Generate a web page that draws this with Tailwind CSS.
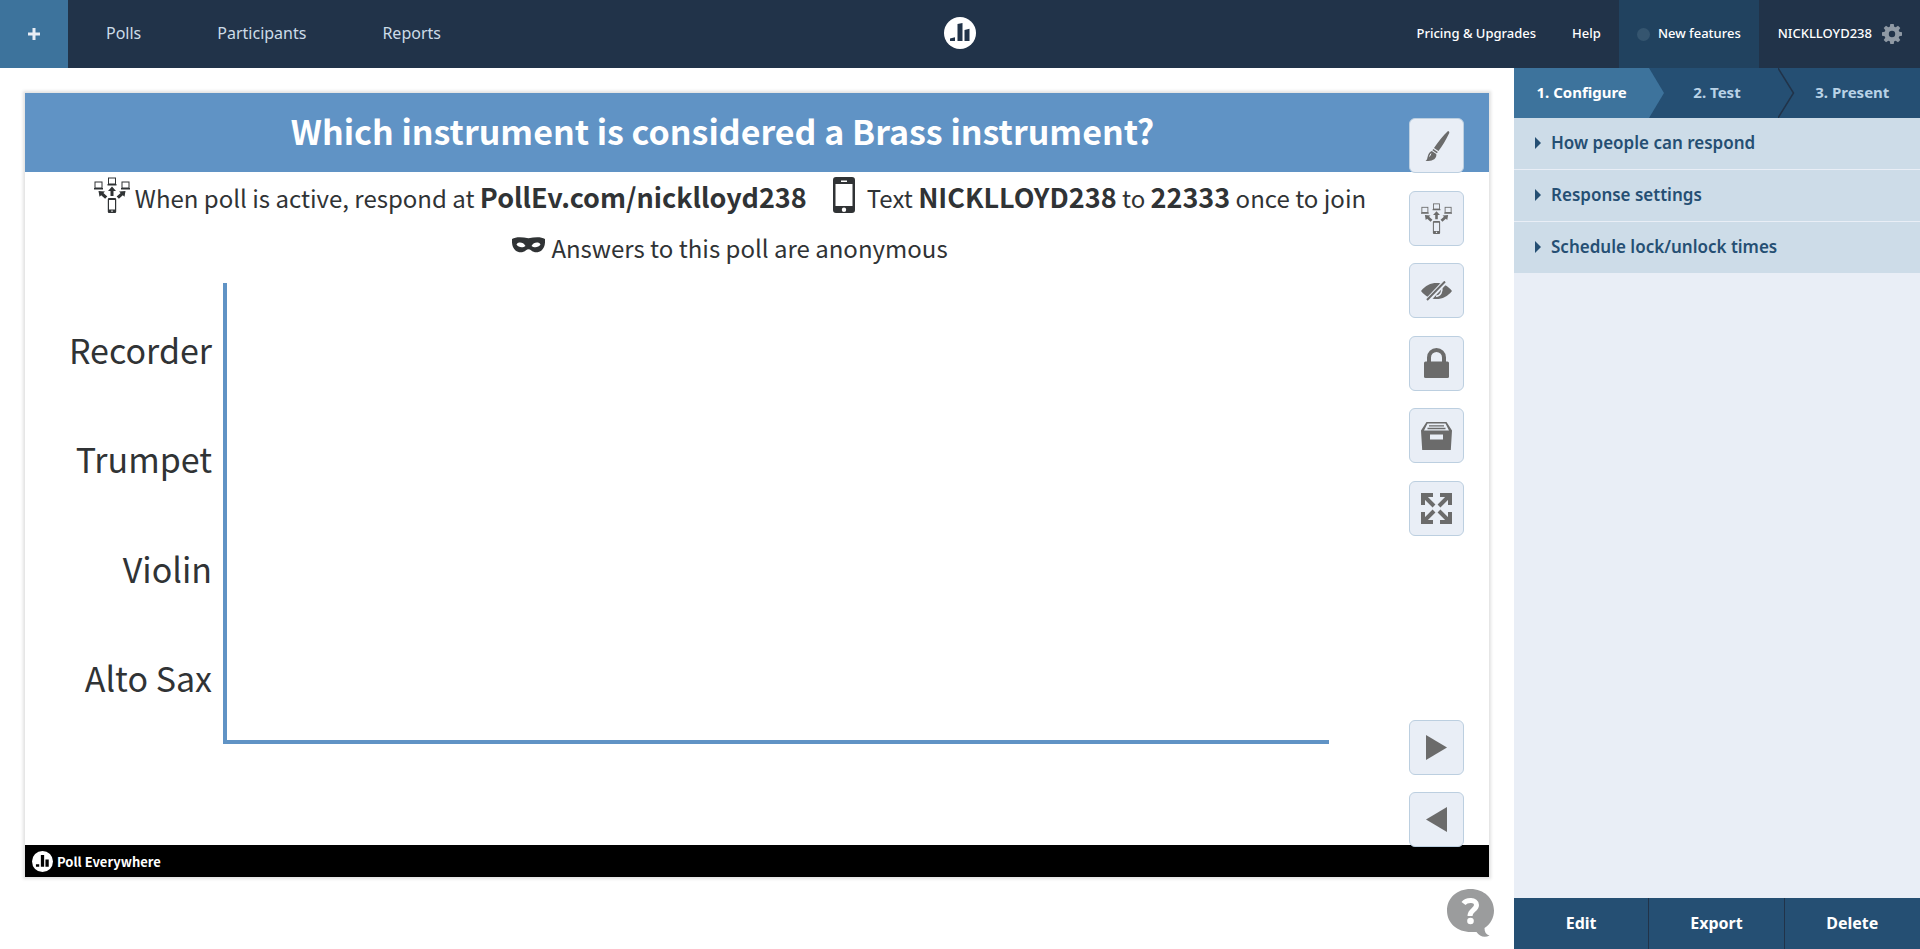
<!DOCTYPE html>
<html lang="en">
<head>
    <meta charset="UTF-8">
    <meta name="viewport" content="width=device-width, initial-scale=1.0">
    <title>Which instrument is considered a Brass instrument? - Poll Everywhere</title>
    <script src="https://cdn.jsdelivr.net/npm/@tailwindcss/browser@4"></script>
</head>
<body class="bg-white h-screen flex flex-col font-['Noto_Sans',sans-serif]">
    <!-- shared icons -->
    <svg class="hidden">
        <symbol id="icon-devices" viewBox="0 0 36 36">
            <g fill="none" stroke="currentColor">
                <rect x="1" y="5" width="7" height="6" />
                <rect x="14.500" y="1" width="7" height="6" />
                <rect x="28" y="5" width="7" height="6" />
            </g>
            <path fill="currentColor" d="M0 11h9v1.500H0zM13.500 7h9v1.500h-9zM27 11h9v1.500h-9zM18 9.500l4 4.500h-2.500v5h-3v-5H14zM4.500 14l6.500.500-1.600 1.500 3.900 3.500-2.200 2.200-3.900-3.500L5.500 19.800zM31.500 14l-6.500.500 1.600 1.500-3.900 3.500 2.200 2.200 3.900-3.500 1.700 1.600z" />
            <path fill="currentColor" fill-rule="evenodd" d="M15 21h6a1.200 1.200 0 0 1 1.200 1.200v12.600A1.200 1.200 0 0 1 21 36h-6a1.200 1.200 0 0 1-1.200-1.200V22.200A1.200 1.200 0 0 1 15 21zm0 2v9.500h6V23zm2.300 10.400v1.400h1.400v-1.400z" />
        </symbol>
    </svg>

    <header class="h-[68px] shrink-0 flex items-center bg-[#213349] text-white relative">
        <button type="button" aria-label="New poll" class="w-[68px] h-full bg-[#3d739c] flex items-center justify-center">
            <svg class="w-3 h-3 text-[#e9eef5]" viewBox="0 0 12 12"><path fill="currentColor" d="M4.500 0h3v4.500H12v3H7.500V12h-3V7.500H0v-3h4.500z" /></svg>
        </button>
        <nav class="flex pb-[2px] text-base text-[#cddce8]">
            <a href="#" class="px-[38px]">Polls</a>
            <a href="#" class="px-[38px]">Participants</a>
            <a href="#" class="px-[38px]">Reports</a>
        </nav>
        <a href="#" aria-label="Poll Everywhere" class="absolute left-1/2 top-[17px] -translate-x-1/2">
            <svg class="w-8 h-8" viewBox="0 0 32 32">
                <circle cx="16" cy="16" r="16" fill="#fff" />
                <path fill="#213349" d="M6 21.500l5-1.300V24H6zM13.500 7l5-1v18h-5zM20.500 13l5-1.300V24h-5z" />
            </svg>
        </a>
        <nav class="ml-auto h-full flex items-center text-[13px] font-medium">
            <a href="#" class="px-[18px]">Pricing &amp; Upgrades</a>
            <a href="#" class="px-[18px]">Help</a>
            <a href="#" class="h-full px-[18px] bg-[#21425f] flex items-center gap-2">
                <span class="w-[13px] h-[13px] rounded-full bg-[#35556f]"></span>
                New features
            </a>
            <a href="#" class="pl-[19px] pr-[18px] flex items-center gap-[10px]">
                NICKLLOYD238
                <svg class="w-5 h-5 text-[#8f99a4]" viewBox="0 0 20 20">
                    <path fill="currentColor" fill-rule="evenodd" d="M8.300 0h3.400l.5 2.700 1.500.6L16 1.700 18.300 4l-1.600 2.300.6 1.500 2.700.5v3.400l-2.700.5-.6 1.500 1.600 2.300-2.300 2.300-2.300-1.600-1.500.6-.5 2.700H8.300l-.5-2.700-1.500-.6L4 18.300 1.700 16l1.600-2.300-.6-1.500L0 11.700V8.300l2.700-.5.6-1.500L1.700 4 4 1.700l2.300 1.600 1.500-.6zM10 6.800a3.200 3.200 0 1 0 0 6.400 3.200 3.200 0 0 0 0-6.400z" />
                </svg>
            </a>
        </nav>
    </header>

    <div class="flex-1 min-h-0 flex">
        <main class="flex-1 relative flex flex-col pt-[25px] pb-[72px] px-[25px]">
            <!-- slide -->
            <section class="flex-1 relative flex flex-col shadow-[0_0_3px_2px_rgba(0,0,0,0.12)] font-['Noto_Sans_CJK_SC',sans-serif] text-[#303335]">
                <h1 class="h-[79px] pr-[69px] pb-1 bg-[#6093c5] flex items-center justify-center text-white text-[34px] font-bold leading-none">Which instrument is considered a Brass instrument?</h1>
                <div class="pr-[54px] text-2xl">
                    <p class="h-[51px] pb-[2px] flex items-center justify-center whitespace-pre leading-none">
                        <svg class="w-9 h-9 mr-[5px] mb-1 shrink-0"><use href="#icon-devices" /></svg>
                        <span>When poll is active, respond at <strong class="text-[27px]">PollEv.com/nicklloyd238</strong></span>
                        <svg class="w-[22px] h-9 ml-[26px] mr-3 mb-1 shrink-0" viewBox="0 0 22 36">
                            <path fill="currentColor" fill-rule="evenodd" d="M3 0h16a3 3 0 0 1 3 3v30a3 3 0 0 1-3 3H3a3 3 0 0 1-3-3V3a3 3 0 0 1 3-3zM2.500 7v22h17V7zM8 3.500V5h6V3.500zM11 30.500a2.200 2.200 0 1 0 0 4.400 2.200 2.200 0 0 0 0-4.400z" />
                        </svg>
                        <span>Text <strong class="text-[27px]">NICKLLOYD238</strong> to <strong class="text-[27px]">22333</strong> once to join</span>
                    </p>
                    <p class="h-[49px] flex items-center justify-center gap-[6px] leading-none">
                        <svg class="w-[33px] h-4 mb-[6px]" viewBox="0 0 33 16">
                            <path fill="currentColor" fill-rule="evenodd" d="M0 2C4-.5 10 0 16.500 1.200 23 0 29-.5 33 2c.3 5-.5 9-3.500 11.500-3 2.500-7.500 2.500-10.500-.3-1.500-1.200-3.500-1.200-5 0C11 16 6.500 16 3.500 13.500.5 11-.3 7 0 2zM4.500 7.500c2 3.300 6.500 3.500 9 1.500C11.500 5 6 4.500 4.500 7.500zm24 0c-1.500-3-7-2.500-9 1.500 2.500 2 7 1.800 9-1.500z" />
                        </svg>
                        <span>Answers to this poll are anonymous</span>
                    </p>
                </div>
                <!-- chart -->
                <div class="flex-1 flex mt-[11px] mb-[101px] mr-[160px]">
                    <ul class="w-[198px] pr-[11px] pt-3 pb-[11px] flex flex-col text-right text-[34px] leading-none">
                        <li class="flex-1 flex items-center justify-end">Recorder</li>
                        <li class="flex-1 flex items-center justify-end">Trumpet</li>
                        <li class="flex-1 flex items-center justify-end">Violin</li>
                        <li class="flex-1 flex items-center justify-end">Alto Sax</li>
                    </ul>
                    <div class="flex-1 border-l-4 border-b-4 border-[#6093c5]"></div>
                </div>
                <footer class="h-8 bg-black text-white flex items-center gap-1 pl-[7px] text-[13px] font-bold leading-none">
                    <svg class="w-[21px] h-[21px]" viewBox="0 0 32 32">
                        <circle cx="16" cy="16" r="16" fill="#fff" />
                        <path d="M6 20h5v4H6zM13.500 6h5v18h-5zM20.500 13h5v11h-5z" />
                    </svg>
                    Poll Everywhere
                </footer>

                <!-- slide controls -->
                <div class="absolute top-[25px] bottom-[30px] right-[25px] flex flex-col justify-between text-[#6b6b6b]">
                    <div class="h-[418px] flex flex-col justify-between">
                        <button type="button" aria-label="Visual settings" class="w-[55px] h-[55px] rounded-md border border-[#bccfe0] bg-[#e9eef6] flex items-center justify-center">
                            <svg class="w-[30px] h-[30px]" viewBox="0 0 30 30">
                                <path fill="currentColor" d="M26 0c1.500.2 1.500 1.500 1 2.600C24 9 20 15.500 16.500 20L12 17C16 11 21 4.500 26 0zM11.300 18l4.500 3-.9 1.200-4.500-3zM9.800 20l4.400 3c1 4-3 7.500-10.700 7 2-1 1.600-3 2.500-5.500.7-2.200 1.800-3.800 3.800-4.500z" />
                                <path fill="none" stroke="#e9eef6" d="M7.500 25.500l1.500-3" />
                            </svg>
                        </button>
                        <button type="button" aria-label="Response instructions" class="w-[55px] h-[55px] rounded-md border border-[#bccfe0] bg-[#e9eef6] flex items-center justify-center">
                            <svg class="w-[31px] h-[31px]"><use href="#icon-devices" /></svg>
                        </button>
                        <button type="button" aria-label="Hide results" class="w-[55px] h-[55px] rounded-md border border-[#bccfe0] bg-[#e9eef6] flex items-center justify-center">
                            <svg class="w-[31px] h-5" viewBox="0 0 31 20">
                                <path fill="currentColor" d="M0 10C4.500 4.500 9.500 2 15.500 2S26.500 4.500 31 10c-4.500 5.500-9.500 8-15.500 8S4.500 15.500 0 10z" />
                                <path fill="none" stroke="#e9eef6" stroke-width="1.500" d="M20.500 6c1.500 4.500-1 9-5.500 9.300" />
                                <path stroke="#e9eef6" stroke-width="5" d="M6 20L24 1" />
                                <path stroke="currentColor" stroke-width="2" d="M6 19L24 .5" />
                            </svg>
                        </button>
                        <button type="button" aria-label="Lock poll" class="w-[55px] h-[55px] rounded-md border border-[#bccfe0] bg-[#e9eef6] flex items-center justify-center">
                            <svg class="w-[25px] h-[30px]" viewBox="0 0 25 30">
                                <path fill="none" stroke="currentColor" stroke-width="4" d="M5 15V9.500a7.500 7.500 0 0 1 15 0V15" />
                                <rect y="13.500" width="25" height="16.500" rx="1.500" fill="currentColor" />
                            </svg>
                        </button>
                        <button type="button" aria-label="Archive results" class="w-[55px] h-[55px] rounded-md border border-[#bccfe0] bg-[#e9eef6] flex items-center justify-center">
                            <svg class="w-[31px] h-7" viewBox="0 0 31 28">
                                <path fill="currentColor" fill-rule="evenodd" d="M5.500 0h20L31 8.500 29.800 28H1.200L0 8.500zM6.500 1.500l-3.500 7h25l-3.500-7zM9 12.500v5h13v-5z" />
                                <path stroke="currentColor" stroke-width="1.300" d="M8 3.800h15M6.500 6.500h18" />
                            </svg>
                        </button>
                        <button type="button" aria-label="Full screen" class="w-[55px] h-[55px] rounded-md border border-[#bccfe0] bg-[#e9eef6] flex items-center justify-center">
                            <svg class="w-[31px] h-[31px]" viewBox="0 0 31 31" fill="none" stroke="currentColor" stroke-width="4">
                                <path d="M12 2H2v10M2 2l11 11M19 2h10v10M29 2L18 13M12 29H2V19M2 29l11-11M19 29h10V19M29 29L18 18" />
                            </svg>
                        </button>
                    </div>
                    <div class="flex flex-col gap-[17px]">
                        <button type="button" aria-label="Next poll" class="w-[55px] h-[55px] rounded-md border border-[#bccfe0] bg-[#e9eef6] flex items-center justify-center">
                            <svg class="w-[21px] h-[25px]" viewBox="0 0 21 25"><path fill="currentColor" d="M0 0l21 12.500L0 25z" /></svg>
                        </button>
                        <button type="button" aria-label="Previous poll" class="w-[55px] h-[55px] rounded-md border border-[#bccfe0] bg-[#e9eef6] flex items-center justify-center">
                            <svg class="w-[21px] h-[25px]" viewBox="0 0 21 25"><path fill="currentColor" d="M21 0L0 12.500 21 25z" /></svg>
                        </button>
                    </div>
                </div>
            </section>

            <button type="button" aria-label="Support" class="absolute right-5 bottom-3">
                <svg class="w-[47px] h-12" viewBox="0 0 47 48">
                    <path fill="#9b9c9d" d="M23.500 0C37 0 47 9.500 47 21.500c0 7.500-3.500 13.500-9.500 17.500 0 4 1.500 6.500 5 7.500-5 2.500-10 1-13-3.500H24C10 43 0 34 0 21.500S10 0 23.500 0z" />
                    <path fill="none" stroke="#fff" stroke-width="5" d="M16.500 14.500c3-4 13-4.500 13 1.500 0 5-6.500 5-6.500 11" />
                    <circle cx="23.500" cy="32" r="3.300" fill="#fff" />
                </svg>
            </button>
        </main>

        <aside class="w-[406px] shrink-0 flex flex-col bg-[#e9eef6]">
            <nav class="h-[50px] grid grid-cols-3 bg-[#254f73] text-[15px] font-bold text-[#b9d2e6]">
                <a href="#" class="relative pb-[2px] bg-[#3d739c] text-white flex items-center justify-center">
                    1. Configure
                    <svg class="absolute left-full top-0 w-[15px] h-full" viewBox="0 0 15 50"><path fill="#3d739c" d="M-1 0h1l15 25L0 50h-1z" /></svg>
                </a>
                <a href="#" class="relative pb-[2px] flex items-center justify-center">
                    2. Test
                    <svg class="absolute -right-[10px] top-0 w-[17px] h-full" viewBox="0 0 17 50"><path fill="none" stroke="#213349" stroke-width="1.500" d="M0 0l15.500 25L0 50" /></svg>
                </a>
                <a href="#" class="pb-[2px] flex items-center justify-center">3. Present</a>
            </nav>
            <div class="flex flex-col gap-px text-[17px] font-semibold text-[#254f73]">
                <button type="button" class="h-[51px] pl-[21px] pb-[2px] flex items-center gap-[10px] bg-[#cddce8]">
                    <svg class="w-[6px] h-3" viewBox="0 0 6 12"><path fill="currentColor" d="M0 0l6 6-6 6z" /></svg>
                    How people can respond
                </button>
                <button type="button" class="h-[51px] pl-[21px] pb-[2px] flex items-center gap-[10px] bg-[#cddce8]">
                    <svg class="w-[6px] h-3" viewBox="0 0 6 12"><path fill="currentColor" d="M0 0l6 6-6 6z" /></svg>
                    Response settings
                </button>
                <button type="button" class="h-[51px] pl-[21px] pb-[2px] flex items-center gap-[10px] bg-[#cddce8]">
                    <svg class="w-[6px] h-3" viewBox="0 0 6 12"><path fill="currentColor" d="M0 0l6 6-6 6z" /></svg>
                    Schedule lock/unlock times
                </button>
            </div>
            <div class="mt-auto h-[51px] grid grid-cols-3 divide-x divide-[#213349] bg-[#254f73] text-base font-bold text-white">
                <button type="button" class="pb-[2px]">Edit</button>
                <button type="button" class="pb-[2px]">Export</button>
                <button type="button" class="pb-[2px]">Delete</button>
            </div>
        </aside>
    </div>
</body>
</html>
